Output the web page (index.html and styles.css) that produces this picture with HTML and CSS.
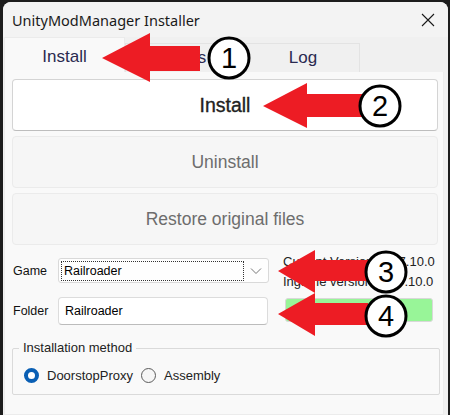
FILE: index.html
```html
<!DOCTYPE html>
<html lang="en">
<head>
	<meta charset="UTF-8">
	<title>UnityModManager Installer</title>
<link rel="stylesheet" href="styles.css">
</head>
<body>
	<div class="window">
		<div class="titlebar">
			<span class="title">UnityModManager Installer</span>
			<svg class="close" width="14" height="14" viewBox="0 0 14 14"><path d="M1 1L13 13M13 1L1 13" stroke="#1a1a1a" stroke-width="1.1" fill="none"/></svg>
		</div>
		<div class="tabs">
			<div class="tab active">Install</div>
			<div class="tab">Mods</div>
			<div class="tab">Log</div>
		</div>
		<div class="page">
			<div class="btn main">Install</div>
			<div class="btn off">Uninstall</div>
			<div class="btn off">Restore original files</div>

			<div class="fields">
				<div class="left">
					<div class="row">
						<span class="lbl">Game</span>
						<div class="combo">
							<span class="focus">Railroader</span>
							<svg width="12" height="8" viewBox="0 0 12 8"><path d="M1 1.5L6 6.5L11 1.5" stroke="#777" stroke-width="1" fill="none"/></svg>
						</div>
					</div>
					<div class="row">
						<span class="lbl">Folder</span>
						<div class="textbox">Railroader</div>
					</div>
				</div>
				<div class="right">
					<div class="ver">Current Version: 0.27.10.0</div>
					<div class="ver">Ingame version: 0.27.10.0</div>
					<div class="status"></div>
				</div>
			</div>

			<div class="group">
				<span class="legend">Installation method</span>
				<label class="radio"><span class="dot on"></span>DoorstopProxy</label>
				<label class="radio"><span class="dot"></span>Assembly</label>
			</div>
		</div>
	</div>

	<!-- annotations drawn over the screenshot -->
	<svg class="marks" width="450" height="415" viewBox="0 0 450 415">
		<g fill="#ed1c24">
			<polygon points="102,58 150,33 150,46 200,46 200,71 150,71 150,82"/>
			<polygon points="263,106 307,83 307,94 362,94 362,117 307,117 307,128"/>
			<polygon points="278,271 315,250 315,260 368,260 368,281 315,281 315,293"/>
			<polygon points="278,314 315,293 315,303 368,303 368,325 315,325 315,336"/>
		</g>
		<g fill="#fff" stroke="#000" stroke-width="3">
			<circle cx="229" cy="58" r="20"/>
			<circle cx="380" cy="106" r="20"/>
			<circle cx="386" cy="272" r="20"/>
			<circle cx="386" cy="316" r="20"/>
		</g>
		<g class="num" text-anchor="middle">
			<text x="229" y="68">1</text>
			<text x="380" y="116">2</text>
			<text x="386" y="282">3</text>
			<text x="386" y="326">4</text>
		</g>
	</svg>
</body>
</html>
```

FILE: styles.css
```css
*{margin: 0;padding: 0;box-sizing: border-box}
body{
	background: #1c1c1c;
	width: 450px;
	height: 415px;
	overflow: hidden;
	position: relative;
	font-family: "Liberation Sans", Arial, sans-serif;
}
.window{
	margin: 2px 0 0 3px;
	width: 445px;
	height: 413px;
	background: #f0f0f0;
	border-radius: 8px 8px 0 0;
	overflow: hidden;
}
.titlebar{
	height: 35px;
	display: flex;
	align-items: center;
	justify-content: space-between;
	padding: 0 13px 0 9px;
	background: #f3f3f3;
}
.title{
	font: 14.5px "Noto Sans", sans-serif;
	color: #1a1a1a;
}
.tabs{
	display: flex;
	align-items: flex-end;
	height: 35px;
	padding-left: 1px;
}
.tab{
	width: 121px;
	height: 29px;
	display: flex;
	align-items: center;
	justify-content: center;
	font-size: 17px;
	color: #2a2a50;
	background: #f0f0f0;
	border: 1px solid #e3e3e3;
	border-bottom: none;
}
.tab.active{
	width: 121px;
	height: 35px;
	background: #f9f9f9;
	border-color: #ebebeb;
	padding-top: 4px;
}
.tab:nth-child(3){width: 114px}
.page{
	width: 440px;
	height: 343px;
	margin-left: 1px;
	background: #f9f9f9;
	border: 1px solid #ececec;
	border-top: none;
	padding: 7px 5px 0 7px;
	display: flex;
	flex-direction: column;
	gap: 5px;
}
.btn{
	height: 52px;
	display: flex;
	align-items: center;
	justify-content: center;
	border: 1px solid #e0e0e0;
	border-radius: 4px;
	font-size: 17.5px;
	color: #6d6d6d;
	background: #f6f6f6;
}
.btn.main{
	background: #fff;
	border-color: #d4d4d4;
	border-bottom-color: #bdbdbd;
	color: #222;
	font-size: 19.5px;
	-webkit-text-stroke: 0.35px #222;
}
.btn.off{
	border-color: #ebebeb;
}
.fields{
	display: flex;
	margin-top: 2px;
}
.left{
	display: flex;
	flex-direction: column;
	gap: 14px;
	padding-top: 6px;
}
.row{
	display: flex;
	align-items: center;
}
.lbl{
	width: 46px;
	font-size: 12.5px;
	color: #111;
	padding-left: 1px;
}
.combo{
	width: 211px;
	height: 25px;
	display: flex;
	align-items: center;
	justify-content: space-between;
	padding: 0 6px 0 2px;
	background: #fefefe;
	border: 1px solid #d9d9d9;
	border-radius: 3px;
	font-size: 12.5px;
}
.focus{
	width: 183px;
	height: 20px;
	line-height: 18px;
	padding-left: 2px;
	border: 1px dotted #333;
}
.textbox{
	width: 210px;
	height: 28px;
	display: flex;
	align-items: center;
	padding-left: 6px;
	background: #fff;
	border: 1px solid #dcdcdc;
	border-bottom-color: #bcbcbc;
	border-radius: 4px;
	font-size: 12.5px;
}
.right{
	margin-left: 14px;
	display: flex;
	flex-direction: column;
}
.ver{
	font-size: 13px;
	color: #222;
	line-height: 20px;
	white-space: nowrap;
}
.status{
	width: 148px;
	height: 24px;
	margin-top: 6px;
	margin-left: 2px;
	background: #98f598;
	border: 1px solid #d8d8d8;
	border-radius: 3px;
}
.group{
	position: relative;
	margin-top: 18px;
	width: 428px;
	height: 47px;
	border: 1px solid #dadada;
	border-radius: 2px;
	display: flex;
	align-items: center;
	padding: 7px 0 0 11px;
	gap: 8px;
}
.legend{
	position: absolute;
	left: 6px;
	top: -9px;
	padding: 0 4px;
	background: #f9f9f9;
	font-size: 13px;
	color: #222;
}
.radio{
	display: flex;
	align-items: center;
	gap: 8px;
	font-size: 13px;
	color: #222;
}
.dot{
	width: 15px;
	height: 15px;
	border-radius: 50%;
	border: 1px solid #5c5c5c;
	background: #f6f6f6;
}
.dot.on{
	border: 4px solid #0a5fb4;
	background: #fff;
}
.marks{
	position: absolute;
	left: 0;
	top: 0;
}
.num text{
	font: 29px "Liberation Sans", Arial, sans-serif;
	fill: #000;
}
```
